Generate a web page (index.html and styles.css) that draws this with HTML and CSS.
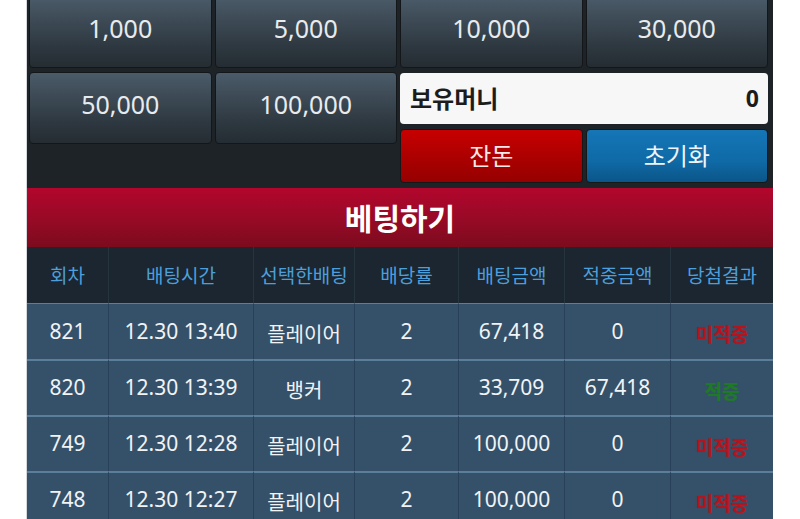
FILE: index.html
```html
<!DOCTYPE html>
<html lang="ko">
<head>
<meta charset="utf-8">
<title>베팅</title>
<link rel="stylesheet" href="styles.css">
</head>
<body>
<div class="app">
  <div class="chips">
    <div class="chip-row">
      <button class="chip">1,000</button>
      <button class="chip">5,000</button>
      <button class="chip">10,000</button>
      <button class="chip">30,000</button>
    </div>
    <div class="lower">
      <div class="chip-pair">
        <button class="chip">50,000</button>
        <button class="chip">100,000</button>
      </div>
      <div class="wallet">
        <div class="money"><span class="money-label">보유머니</span><span class="money-value">0</span></div>
        <div class="actions">
          <button class="act act-red">잔돈</button>
          <button class="act act-blue">초기화</button>
        </div>
      </div>
    </div>
  </div>
  <div class="bet-bar">베팅하기</div>
  <table class="history">
    <colgroup>
      <col class="c1"><col class="c2"><col class="c3"><col class="c4"><col class="c5"><col class="c6"><col class="c7">
    </colgroup>
    <thead>
      <tr><th>회차</th><th>배팅시간</th><th>선택한배팅</th><th>배당률</th><th>배팅금액</th><th>적중금액</th><th>당첨결과</th></tr>
    </thead>
    <tbody>
      <tr><td>821</td><td>12.30 13:40</td><td class="ko">플레이어</td><td>2</td><td>67,418</td><td>0</td><td class="lose">미적중</td></tr>
      <tr><td>820</td><td>12.30 13:39</td><td class="ko">뱅커</td><td>2</td><td>33,709</td><td>67,418</td><td class="win">적중</td></tr>
      <tr><td>749</td><td>12.30 12:28</td><td class="ko">플레이어</td><td>2</td><td>100,000</td><td>0</td><td class="lose">미적중</td></tr>
      <tr><td>748</td><td>12.30 12:27</td><td class="ko">플레이어</td><td>2</td><td>100,000</td><td>0</td><td class="lose">미적중</td></tr>
    </tbody>
  </table>
</div>
</body>
</html>
```
FILE: styles.css
```css
html, body {
  margin: 0;
  padding: 0;
  background: #ffffff;
  overflow: hidden;
}
body {
  font-family: "Noto Sans", "Open Sans", "Noto Sans CJK KR", sans-serif;
}
.app {
  width: 746px;
  margin: -4px 0 0 27px;
  background: #1e2327;
  box-shadow: -1px 0 0 #d4d8dc;
}
.chips {
  padding: 0 5px 5px 2px;
}
.chip-row {
  display: grid;
  grid-template-columns: repeat(4, 1fr);
  gap: 3px;
  height: 72px;
}
.chip {
  font-family: "Noto Sans", "Open Sans", sans-serif;
  font-size: 25px;
  color: #e8ebee;
  background: linear-gradient(#4b5b69, #2e3840 70%, #252d33);
  border: 1px solid #13171a;
  border-radius: 4px;
  padding: 0 0 8px;
  margin: 0;
  height: 72px;
}
.lower {
  display: flex;
  gap: 3px;
  margin-top: 4px;
}
.chip-pair {
  flex: 1;
  display: grid;
  grid-template-columns: 1fr 1fr;
  gap: 3px;
  align-self: flex-start;
}
.wallet {
  flex: 1;
  display: flex;
  flex-direction: column;
  gap: 5px;
  padding-top: 1px;
}
.money {
  height: 51px;
  box-sizing: border-box;
  background: #f7f7f7;
  border-radius: 4px;
  display: flex;
  align-items: center;
  justify-content: space-between;
  padding: 0 9px 2px 10px;
  font-family: "Noto Sans", "Noto Sans CJK KR", sans-serif;
  font-weight: 700;
  color: #1c1c1c;
}
.money-label {
  font-size: 24px;
}
.money-value {
  font-size: 23px;
}
.actions {
  display: grid;
  grid-template-columns: 1fr 1fr;
  gap: 3px;
  height: 54px;
}
.act {
  font-family: "Noto Sans CJK KR", sans-serif;
  font-size: 24px;
  color: #f6e9ea;
  border-radius: 4px;
  border: 1px solid #151719;
  margin: 0;
  padding: 0 0 4px;
}
.act-red {
  background: linear-gradient(#c70000, #a80000 60%, #960000);
}
.act-blue {
  color: #eef4f8;
  background: linear-gradient(#1576b6, #0f6aa6 60%, #0b5588);
}
.bet-bar {
  height: 59px;
  display: flex;
  align-items: center;
  justify-content: center;
  background: linear-gradient(#b3062d, #960a26 55%, #7c0b1e);
  color: #ffffff;
  font-family: "Noto Sans CJK KR", sans-serif;
  font-weight: 700;
  font-size: 30px;
  padding-bottom: 2px;
  box-sizing: border-box;
}
.history {
  width: 746px;
  table-layout: fixed;
  border-collapse: separate;
  border-spacing: 0;
}
.c1 { width: 81px; }
.c2 { width: 145px; }
.c3 { width: 101px; }
.c4 { width: 104px; }
.c5 { width: 106px; }
.c6 { width: 106px; }
.c7 { width: 103px; }
.history th {
  box-sizing: border-box;
  height: 57px;
  padding: 0 0 2px;
  background: #1b2630;
  color: #4c9fdb;
  font-family: "Noto Sans CJK KR", sans-serif;
  font-weight: 400;
  font-size: 19px;
  border-left: 1px solid #263440;
  border-bottom: 1px solid #5e7d96;
}
.history th:first-child,
.history td:first-child {
  border-left: none;
}
.history td {
  box-sizing: border-box;
  height: 56px;
  padding: 0 0 2px;
  background: #35516a;
  color: #f1f3f5;
  text-align: center;
  font-family: "Noto Sans", "Open Sans", "Noto Sans CJK KR", sans-serif;
  font-size: 21px;
  border-left: 1px solid #28405a;
  border-top: 2px solid #5b7e9a;
}
.history tbody tr:first-child td {
  border-top: none;
  height: 55px;
}
.history td.ko {
  font-family: "Noto Sans CJK KR", sans-serif;
  font-size: 20px;
  padding-top: 3px;
  padding-bottom: 0;
}
.history td.lose,
.history td.win {
  font-family: "Noto Sans CJK KR", sans-serif;
  font-size: 19px;
  font-weight: 700;
  padding-top: 4px;
  padding-bottom: 0;
}
.history td.lose {
  color: #b3151f;
  text-shadow: 0 0 1px rgba(179, 21, 31, 0.7);
}
.history td.win {
  color: #1f7a27;
  text-shadow: 0 0 1px rgba(31, 122, 39, 0.7);
}
```
